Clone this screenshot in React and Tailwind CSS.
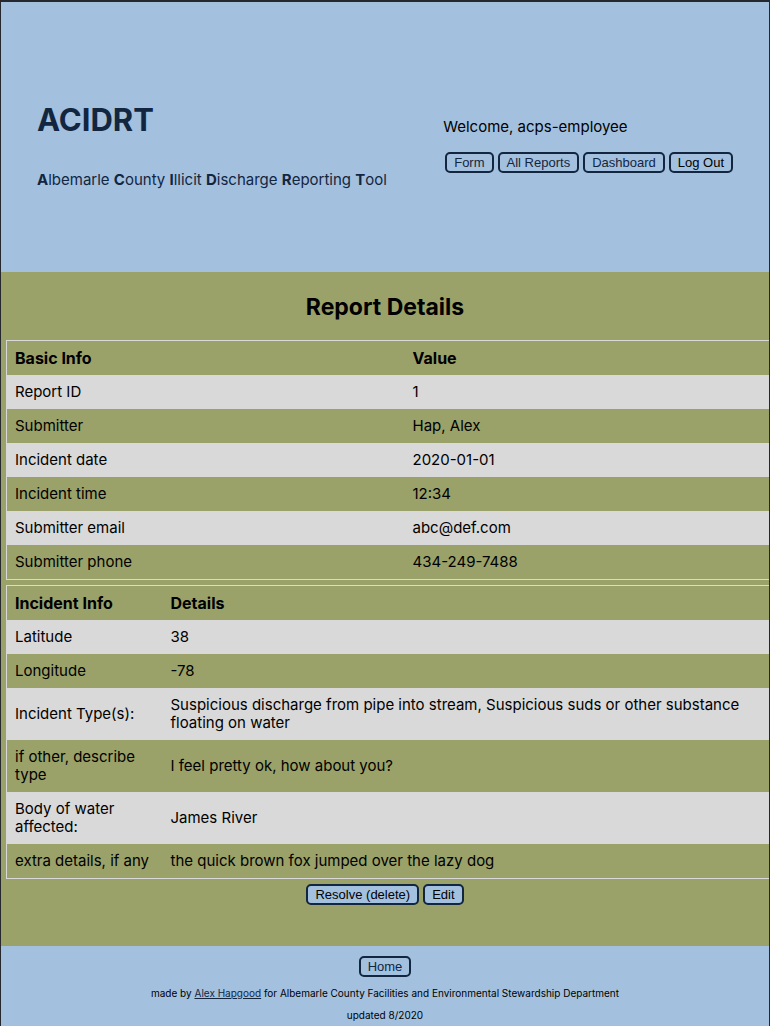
const btn = "inline-block rounded-[5px] border-2 border-[#12263f] bg-[#a3c0df] px-[7px] font-[Liberation_Sans,Arial,sans-serif] text-[13px] leading-[17px]";
const basic = [
  ["Report ID", "1"],
  ["Submitter", "Hap, Alex"],
  ["Incident date", "2020-01-01"],
  ["Incident time", "12:34"],
  ["Submitter email", "abc@def.com"],
  ["Submitter phone", "434-249-7488"],
];
const incident = [
  ["Latitude", "38"],
  ["Longitude", "-78"],
  ["Incident Type(s):", "Suspicious discharge from pipe into stream, Suspicious suds or other substance floating on water"],
  ["if other, describe type", "I feel pretty ok, how about you?"],
  ["Body of water affected:", "James River"],
  ["extra details, if any", "the quick brown fox jumped over the lazy dog"],
];

function Table({ head, rows, first }) {
  return (
    <table className="w-full table-fixed border-collapse border border-r-0 border-[#d9d9d9] text-left">
      <colgroup><col className={first} /><col /></colgroup>
      <thead>
        <tr>{head.map((h) => <th key={h} className="p-2 text-base leading-[18px] font-bold">{h}</th>)}</tr>
      </thead>
      <tbody>
        {rows.map(([k, v]) => (
          <tr key={k} className="odd:bg-[#d9d9d9]">
            <td className="p-2 align-middle">{k}</td>
            <td className="p-2 align-middle">{v}</td>
          </tr>
        ))}
      </tbody>
    </table>
  );
}

export default function App() {
  return (
    <div className="flex min-h-screen flex-col border-l border-r border-t-2 border-[#25292e] bg-[#a3c0df] font-[Inter,sans-serif] text-[15px] leading-[18px] text-black">
      <header className="flex h-[270px] items-center justify-between px-9 text-[#12263f]">
        <div className="pt-4">
          <h1 className="text-[31px] leading-[38px] font-bold">ACIDRT</h1>
          <p className="mt-8">
            <b>A</b>lbemarle <b>C</b>ounty <b>I</b>llicit <b>D</b>ischarge <b>R</b>eporting <b>T</b>ool
          </p>
        </div>
        <div className="pt-4">
          <p className="text-black">Welcome, acps-employee</p>
          <nav className="mt-4 ml-0.5 flex gap-1">
            <a href="#form" className={btn}>Form</a>
            <a href="#reports" className={btn}>All Reports</a>
            <a href="#dashboard" className={btn}>Dashboard</a>
            <button className={btn + " text-black"}>Log Out</button>
          </nav>
        </div>
      </header>
      <main className="bg-[#9aa269] pb-[41px]">
        <h2 className="pt-[21px] pb-[19px] text-center text-[23px] leading-7 font-bold">Report Details</h2>
        <div className="flex flex-col gap-[5px] pl-[5px]">
          <Table head={["Basic Info", "Value"]} rows={basic} first="w-[398px]" />
          <Table head={["Incident Info", "Details"]} rows={incident} first="w-[156px]" />
        </div>
        <div className="mt-[5px] flex justify-center gap-1">
          <button className={btn}>Resolve (delete)</button>
          <button className={btn}>Edit</button>
        </div>
      </main>
      <footer className="flex flex-col items-center pt-2.5 text-[10px] leading-3">
        <a href="#home" className={btn + " text-[#12263f]"}>Home</a>
        <p className="mt-2.5">
          made by <a href="#author" className="text-[#12263f] underline">Alex Hapgood</a> for Albemarle County Facilities and Environmental Stewardship Department
        </p>
        <p className="mt-2.5">updated 8/2020</p>
      </footer>
    </div>
  );
}
